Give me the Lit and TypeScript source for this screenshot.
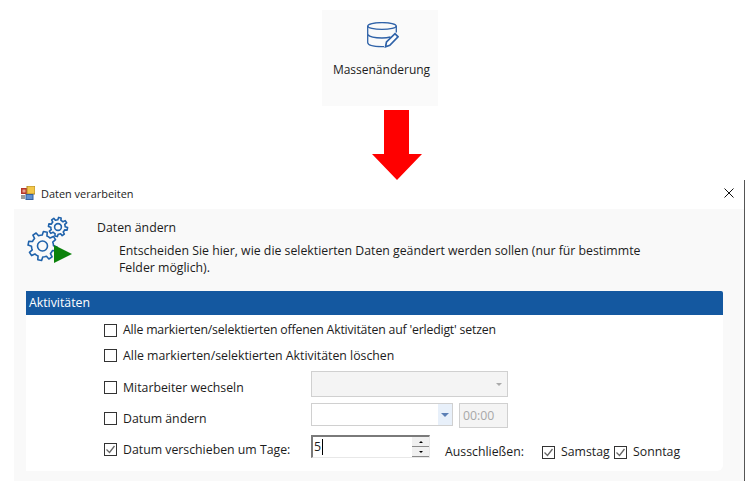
import { LitElement, html, css, svg } from "lit";
import { customElement } from "lit/decorators.js";

function gearPath(cx: number, cy: number, r: number, R: number, teeth: number): string {
  const pts: string[] = [];
  const step = (Math.PI * 2) / teeth;
  for (let i = 0; i < teeth; i++) {
    const a = i * step + step / 4;
    const seq: [number, number][] = [
      [r, a - step * 0.5],
      [r, a - step * 0.28],
      [R, a - step * 0.17],
      [R, a + step * 0.17],
      [r, a + step * 0.28],
    ];
    for (const [rad, t] of seq) {
      pts.push(`${(cx + rad * Math.cos(t)).toFixed(2)} ${(cy + rad * Math.sin(t)).toFixed(2)}`);
    }
  }
  return "M" + pts.join("L") + "Z";
}

const checkbox = (checked: boolean) => html`<span class="cb">${checked
  ? html`<svg width="11" height="11" viewBox="0 0 11 11"><path d="M1.5 5.5L4.5 8.5L9.5 2" fill="none" stroke="#666" stroke-width="1.3"/></svg>`
  : ""}</span>`;

@customElement("app-root")
export class AppRoot extends LitElement {
  static styles = css`
    :host { display: block; width: 745px; height: 481px; overflow: hidden; background: #fff;
      font-family: "Open Sans", "Noto Sans", sans-serif; font-size: 12.3px; color: #1c1c1c; }
    .top { height: 180px; box-sizing: border-box; padding-top: 10px; display: flex; flex-direction: column; }
    .card { margin-left: 322px; width: 116px; height: 96px; background: #fafafa; display: flex; flex-direction: column; align-items: center; box-sizing: border-box; padding-top: 12px; }
    .card svg { display: block; margin-left: 6px; }
    .card .label { margin-top: 13px; padding-left: 3px; line-height: 18px; font-size: 12px; }
    .arrow { display: block; margin: 4px 0 0 372px; }
    .dialog { height: 301px; border-right: 1px solid #555; display: flex; flex-direction: column; }
    .title { height: 29px; display: flex; align-items: center; padding: 0 0 3px 21px; flex: none; box-sizing: border-box; }
    .title .name { margin: 1px 0 0 6px; font-size: 10.95px; line-height: 16px; }
    .close { margin-left: auto; margin-right: 10px; display: block; }
    .panel { flex: 1; margin-left: 14px; background: #f9f9f9; display: flex; flex-direction: column; min-height: 0; }
    .head { height: 82px; display: flex; flex: none; box-sizing: border-box; padding: 7px 0 0 13px; }
    .head-icon { display: block; flex: none; }
    .head-text { margin-left: 24px; padding-top: 2px; }
    .head-title { line-height: 20px; }
    .head-desc { margin: 4px 0 0 22px; line-height: 17px; width: 530px; }
    .section { width: 697px; margin-left: 12px; flex: none; }
    .bar { height: 24px; background: #1458a0; color: #fff; line-height: 24px; padding-left: 3px; border-radius: 0 2px 0 0; }
    .body { background: #fff; height: 156px; box-sizing: border-box; padding: 3px 0 0 78px; display: flex; flex-direction: column; border-radius: 0 0 6px 0; }
    .row { display: flex; align-items: center; flex: none; }
    .r1 { height: 24px; }
    .r1 .lab { letter-spacing: -0.19px; }
    .r2 { height: 24px; margin-top: 1px; }
    .r3 { height: 30px; margin-top: 5px; }
    .r2 .lab, .r3 .lab { margin-top: 2px; }
    .r4 { height: 30px; margin-top: 1px; align-items: flex-start; }
    .r5 { height: 30px; margin-top: 2px; }
    .cb { width: 11px; height: 11px; border: 1px solid #333; background: #fff; flex: none; box-sizing: content-box; display: flex; align-items: center; justify-content: center; margin-right: 6px; }
    .r4 .cb { margin-top: 9px; }
    .r4 .lab { margin-top: 8px; }
    .r5 > .cb { margin-bottom: 2px; }
    .lab { line-height: 16px; white-space: nowrap; }
    .lab.wide { width: 188px; flex: none; }
    .select { width: 197px; height: 26px; box-sizing: border-box; border: 1px solid #d0d0d0; background: #f4f4f4; display: flex; align-items: center; justify-content: flex-end; padding-right: 5px; margin-bottom: 6px; }
    .caret { width: 0; height: 0; border-left: 3px solid transparent; border-right: 3px solid transparent; border-top: 3px solid #aaa; }
    .date { width: 142px; height: 23px; box-sizing: border-box; border: 1px solid #d0d0d0; background: #fff; display: flex; justify-content: flex-end; }
    .date .btn { width: 14px; background: #e8f0fa; display: flex; align-items: center; justify-content: center; }
    .date .caret { border-left-width: 4px; border-right-width: 4px; border-top: 4px solid #5b7fb5; }
    .time { width: 49px; height: 25px; margin-left: 6px; box-sizing: border-box; border: 1px solid #d0d0d0; background: #f4f4f4; color: #a8a8a8; line-height: 23px; padding-left: 3px; }
    .spin { width: 119px; height: 23px; box-sizing: border-box; flex: none; align-self: flex-start; border-style: solid; border-color: #7a7a7a #e8e8e8 #e8e8e8 #7a7a7a; border-width: 2px 1px 1px 2px; background: #fff; display: flex; align-items: center; }
    .spin .val { flex: 1; padding-left: 1px; line-height: 18px; display: flex; align-items: center; }
    .cursor { width: 1px; height: 16px; background: #000; margin-left: 1px; }
    .spin .btns { width: 17px; height: 100%; flex: none; display: flex; flex-direction: column; gap: 1px; background: #8a8a8a; padding-bottom: 1px; box-sizing: border-box; }
    .spin .b { flex: 1; background: #f0f0f0; display: flex; align-items: center; justify-content: center; }
    .up { width: 0; height: 0; border-left: 2px solid transparent; border-right: 2px solid transparent; border-bottom: 2px solid #000; }
    .dn { width: 0; height: 0; border-left: 2px solid transparent; border-right: 2px solid transparent; border-top: 2px solid #000; }
    .excl { margin-left: 15px; width: 97px; flex: none; padding-top: 4px; line-height: 16px; }
    .pair { display: flex; align-items: center; padding-top: 4px; }
    .pair .lab { width: 53px; }
  `;

  render() {
    const blue = "#2f62a8";
    return html`
      <div class="top">
        <div class="card">
          <svg width="32" height="26" viewBox="0 0 32 26">
            <g fill="none" stroke="${blue}" stroke-width="1.3">
              <ellipse cx="15" cy="4" rx="14.3" ry="3.4"/>
              <path d="M.7 4V20.5C.7 23.5 8 24.6 15 24.6H17M29.3 4V10.5M.7 12.5C3 15.3 9 16 15 16C18.5 16 21 15.7 23.5 15"/>
            </g>
            <path d="M18.5 24.8L19.5 20L28 11.7L31 14.8L22.8 23.3Z" fill="#fff" stroke="${blue}" stroke-width="1.7"/>
          </svg>
          <div class="label">Massenänderung</div>
        </div>
        <svg class="arrow" width="50" height="70" viewBox="0 0 50 70">
          <path d="M12 0H37V44H50L25 70L0 44H12Z" fill="#f00"/>
        </svg>
      </div>
      <div class="dialog">
        <div class="title">
          <svg width="14" height="14" viewBox="0 0 14 14">
            <rect x="0" y="2" width="6" height="6" fill="#b5362a"/>
            <rect x="1.5" y="3.5" width="3" height="3" fill="#e8a090"/>
            <rect x="6" y="0" width="8" height="8" fill="#f3c74a" stroke="#b08a2a" stroke-width="1"/>
            <rect x="5" y="8.5" width="7" height="5" fill="#5f8fd0" stroke="#33609f" stroke-width="1"/>
            <rect x="0" y="9" width="4" height="4" fill="#9a9a9a"/>
          </svg>
          <span class="name">Daten verarbeiten</span>
          <svg class="close" width="10" height="10" viewBox="0 0 10 10"><path d="M.5 .5L9.5 9.5M9.5 .5L.5 9.5" stroke="#111" stroke-width="1" fill="none"/></svg>
        </div>
        <div class="panel">
          <div class="head">
            <svg class="head-icon" width="46" height="48" viewBox="0 0 46 48">
              ${svg`
                <g fill="none" stroke="#1f62ab" stroke-width="1.6" stroke-linejoin="round">
                  <path d="${gearPath(31, 11, 7.2, 9.6, 8)}"/>
                  <circle cx="31" cy="11" r="3.4"/>
                  <path d="${gearPath(15.5, 30, 11, 14.5, 8)}" fill="#f9f9f9"/>
                  <circle cx="15.5" cy="30" r="5"/>
                </g>
                <path d="M27 29L45 38L27 47Z" fill="#0b820b"/>
              `}
            </svg>
            <div class="head-text">
              <div class="head-title">Daten ändern</div>
              <div class="head-desc">Entscheiden Sie hier, wie die selektierten Daten geändert werden sollen (nur für bestimmte Felder möglich).</div>
            </div>
          </div>
          <div class="section">
            <div class="bar">Aktivitäten</div>
            <div class="body">
              <div class="row r1">${checkbox(false)}<span class="lab">Alle markierten/selektierten offenen Aktivitäten auf 'erledigt' setzen</span></div>
              <div class="row r2">${checkbox(false)}<span class="lab">Alle markierten/selektierten Aktivitäten löschen</span></div>
              <div class="row r3">${checkbox(false)}<span class="lab wide">Mitarbeiter wechseln</span><div class="select"><span class="caret"></span></div></div>
              <div class="row r4">${checkbox(false)}<span class="lab wide">Datum ändern</span><div class="date"><div class="btn"><span class="caret"></span></div></div><div class="time">00:00</div></div>
              <div class="row r5">${checkbox(true)}<span class="lab wide">Datum verschieben um Tage:</span>
                <div class="spin"><div class="val">5<span class="cursor"></span></div><div class="btns"><div class="b"><span class="up"></span></div><div class="b"><span class="dn"></span></div></div></div>
                <span class="excl">Ausschließen:</span>
                <div class="pair">${checkbox(true)}<span class="lab">Samstag</span></div>
                <div class="pair">${checkbox(true)}<span class="lab">Sonntag</span></div>
              </div>
            </div>
          </div>
        </div>
      </div>
    `;
  }
}
